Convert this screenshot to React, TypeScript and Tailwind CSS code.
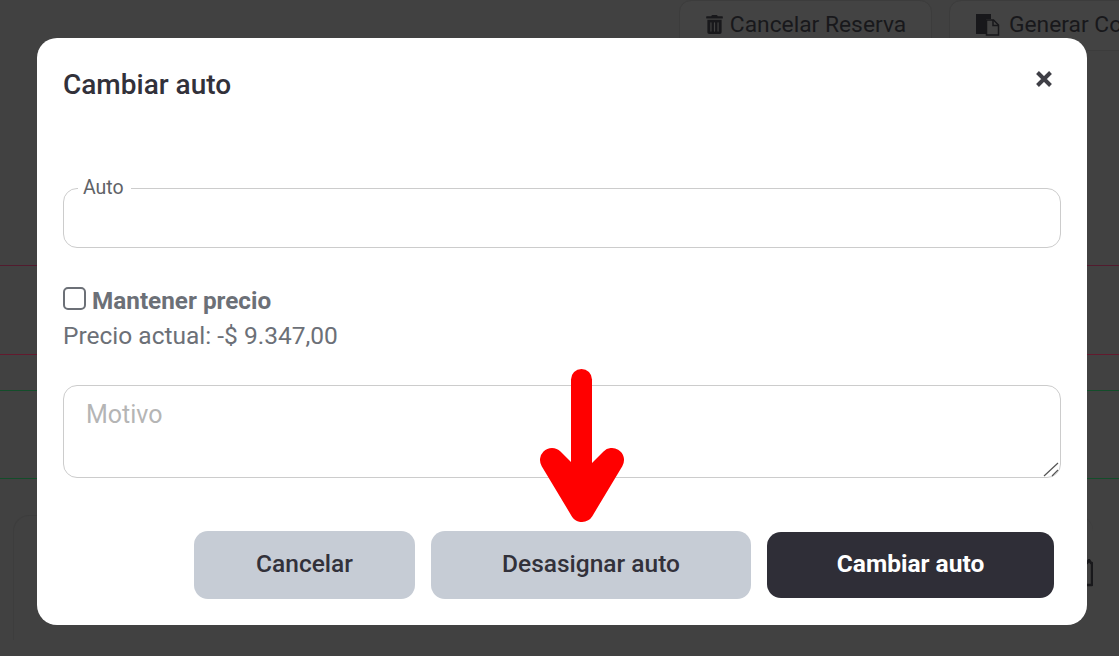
import { FaTrashAlt } from "react-icons/fa";

const App = () => {
  return (
    <div
      className="relative h-[656px] w-[1119px] overflow-hidden bg-[#414141] text-[#32313a]"
      style={{ fontFamily: "Roboto, sans-serif" }}
    >
      {/* pagina de atras */}
      <div className="flex h-[51px] gap-[17px] pl-[679px]">
        <div className="flex h-[51px] w-[253px] shrink-0 items-start justify-center gap-[6px] rounded-xl border border-[#3c3c3c] bg-[#434343] pt-[11px] text-[22.8px] leading-[26px] text-[#18181b]">
          <FaTrashAlt className="mt-[3px] text-[19px]" />
          <span>Cancelar Reserva</span>
        </div>
        <div className="flex h-[51px] w-[300px] shrink-0 items-start gap-[9px] whitespace-nowrap rounded-xl border border-[#3c3c3c] bg-[#434343] pl-[25px] pt-[11px] text-[22.8px] leading-[26px] text-[#18181b]">
          <svg className="mt-[1px] shrink-0" width="25" height="23" viewBox="0 0 25 23">
            <path d="M1 1h15v5h-5v15H1Z" fill="#18181b" />
            <path d="M11.500 7h7l5 5v10h-12Z" fill="#434343" stroke="#18181b" strokeWidth="1.500" />
            <path d="M18 7v5.500h5" fill="none" stroke="#18181b" strokeWidth="1.500" />
          </svg>
          <span>Generar Co</span>
        </div>
      </div>
      <div className="mt-[214px] h-px bg-[#521b2e]" />
      <div className="mt-[88px] h-px bg-[#631a2e]" />
      <div className="mt-[35px] h-px bg-[#134d2a]" />
      <div className="mt-[87px] h-px bg-[#134d2a]" />

      {/* card de abajo */}
      <div className="ml-[13px] mr-[26px] mt-[36px] flex h-[125px] justify-end rounded-t-2xl border-l border-t border-[#3d3d3d] pt-[43px]">
        <svg width="8" height="28" viewBox="0 0 8 28" fill="none" stroke="#18181b" strokeWidth="2.500" strokeLinejoin="round">
          <path d="M0 4h2l2-3 2 3h1v22H0" />
        </svg>
      </div>

      {/* modal */}
      <div className="absolute left-[37px] top-[38px] flex h-[587px] w-[1050px] flex-col rounded-[20px] bg-white px-[26px]">
        <div className="flex items-start justify-between">
          <h2 className="mt-[31px] text-[28px] font-medium leading-[32px]">Cambiar auto</h2>
          <button className="mr-[8px] mt-[32px] text-[#3f3f46]">
            <svg width="18" height="18" viewBox="0 0 18 18" fill="none" stroke="currentColor" strokeWidth="4">
              <path d="M2.500 2.500 15.500 15.500M15.500 2.500 2.500 15.500" />
            </svg>
          </button>
        </div>

        <fieldset className="mt-[78px] h-[69px] rounded-[14px] border border-[#cccccc] px-[14px]">
          <legend className="pl-[5px] pr-[7px] text-[19.5px] leading-[18px] text-[#5f6368]">Auto</legend>
        </fieldset>

        <label className="mt-[39px] flex items-start gap-[6px] font-bold text-[#6c7077]">
          <span className="h-[23px] w-[23px] rounded-[5px] border-2 border-[#6c7077]" />
          <span className="text-[24.3px] leading-7">Mantener precio</span>
        </label>
        <p className="mt-[7px] text-[24.5px] leading-7 text-[#6c7077]">Precio actual: -$ 9.347,00</p>

        <div className="relative mt-[35px] h-[93px]">
          <textarea
            placeholder="Motivo"
            className="h-full w-full resize-none rounded-[14px] border border-[#cccccc] px-[22px] pb-[14px] pt-[15px] text-[25px] leading-7 outline-none placeholder:text-[#b5b5b5]"
          />
          <svg className="absolute bottom-[1px] right-[1px]" width="17" height="15" viewBox="0 0 17 15" fill="none" stroke="#555" strokeWidth="1.200">
            <path d="M1 14 15 1M9 14l6-6" />
          </svg>
        </div>

        <div className="mt-[53px] flex items-center justify-end gap-4 pr-[7px]">
          <button className="h-[68px] w-[221px] rounded-[14px] bg-[#c6ccd5] pb-[2px] text-[24.5px] font-medium">Cancelar</button>
          <button className="h-[68px] w-[320px] rounded-[14px] bg-[#c6ccd5] pb-[2px] text-[24.5px] font-medium">Desasignar auto</button>
          <button className="h-[66px] w-[287px] rounded-[14px] bg-[#2f2e37] pb-[2px] text-[24.5px] font-bold text-white">Cambiar auto</button>
        </div>
      </div>

      {/* flecha roja */}
      <svg className="absolute left-[530px] top-[360px]" width="104" height="170" viewBox="0 0 104 170" fill="none" stroke="#ff0000" strokeLinecap="round" strokeLinejoin="round">
        <path d="M51.500 19.500V120" strokeWidth="21" />
        <path d="M22 100 52 150 82 100 52 130Z" fill="#ff0000" strokeWidth="24" />
      </svg>
    </div>
  );
};

export default App;
